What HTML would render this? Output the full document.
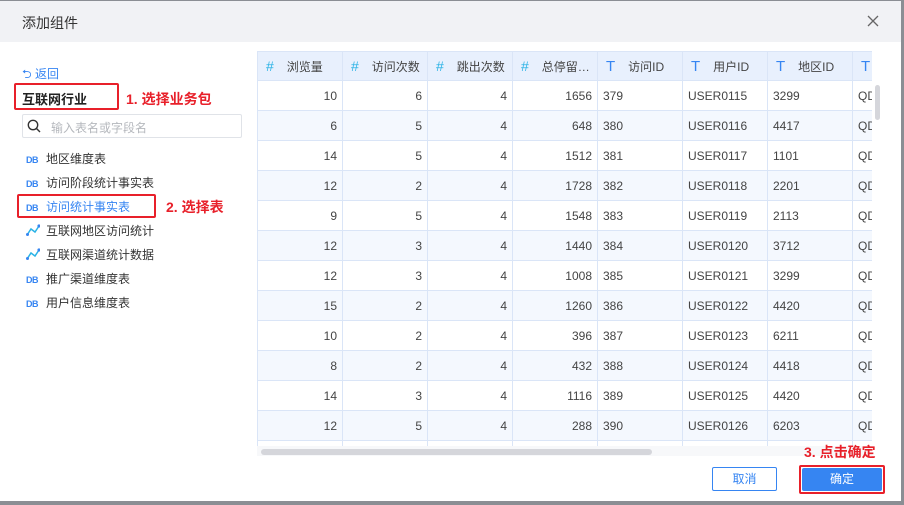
<!DOCTYPE html>
<html><head><meta charset="utf-8"><style>
*{margin:0;padding:0;box-sizing:border-box}
body{width:904px;height:505px;background:#8b8e94;font-family:"Liberation Sans","Noto Sans CJK SC",sans-serif;position:relative;overflow:hidden}
.dlg{position:absolute;left:0;top:1px;width:901px;height:500px;background:#fff}
.hd{height:41px;background:#f1f2f5;font-size:14px;color:#333;padding:12px 0 0 22px}
.abs{position:absolute}
.red{position:absolute;border:2px solid #e8202a;border-radius:2px}
.rt{position:absolute;color:#e8202a;font-size:14px;font-weight:bold}
.li{position:absolute;left:26px;font-size:12px;color:#333;white-space:nowrap}
.db{display:inline-block;width:14px;color:#3685f2;font-size:9px;font-weight:bold;margin-right:6px;letter-spacing:-0.5px}
table{border-collapse:collapse;position:absolute;table-layout:fixed;width:635px}
td,th{border:1px solid #dae5f7;height:30px;font-size:12px;color:#444;padding:0 5px;white-space:nowrap;overflow:hidden;font-weight:normal}
th{height:29px;background:#e8f0fd;text-align:left;color:#444}
th .h{color:#2bb3e6;font-size:14px;margin-right:13px;margin-left:3px}
th .t{color:#3685f2;font-size:15px;margin-right:13px;margin-left:3px}
td.n{text-align:right}
tr:nth-child(odd) td{background:#f4f8fe}
.clip{position:absolute;left:257px;top:51px;width:615px;height:395px;overflow:hidden}
.clip table{left:0;top:0}
.btn{position:absolute;font-size:12px;text-align:center;line-height:22px;border-radius:2px}
</style></head><body>
<div class="dlg">
<div class="hd">添加组件</div>
<svg class="abs" style="left:867px;top:14px" width="12" height="12"><path d="M1 1L11 11M11 1L1 11" stroke="#666" stroke-width="1.3"/></svg>
<div class="abs" style="left:22px;top:64px;font-size:12px;color:#3685f2">⮌ 返回</div>
<div class="abs" style="left:22px;top:88px;font-size:13px;font-weight:bold;color:#222">互联网行业</div>
<div class="red" style="left:14px;top:82px;width:105px;height:27px"></div>
<div class="rt" style="left:126px;top:88px">1. 选择业务包</div>
<div class="abs" style="left:22px;top:113px;width:220px;height:24px;border:1px solid #e0e3e8;border-radius:2px"></div>
<svg class="abs" style="left:27px;top:118px" width="14" height="14"><circle cx="6" cy="6" r="4.7" fill="none" stroke="#333" stroke-width="1.4"/><line x1="9.5" y1="9.5" x2="13" y2="13" stroke="#333" stroke-width="1.4"/></svg>
<div class="abs" style="left:51px;top:118px;font-size:12px;color:#b5b8bd">输入表名或字段名</div>
<div class="li" style="top:149px"><span class="db">DB</span>地区维度表</div>
<div class="li" style="top:173px"><span class="db">DB</span>访问阶段统计事实表</div>
<div class="li" style="top:197px;color:#3685f2"><span class="db">DB</span>访问统计事实表</div>
<div class="red" style="left:17px;top:193px;width:139px;height:24px"></div>
<div class="rt" style="left:166px;top:196px">2. 选择表</div>
<div class="li" style="top:221px"><svg width="14" height="12" style="margin-right:6px;vertical-align:-1px"><path d="M1 11L5 5L9 8L13 2" fill="none" stroke="#2bb3e6" stroke-width="1.5"/><circle cx="13" cy="2" r="1.6" fill="#3685f2"/><circle cx="1.5" cy="10.5" r="1.5" fill="#3685f2"/></svg>互联网地区访问统计</div>
<div class="li" style="top:245px"><svg width="14" height="12" style="margin-right:6px;vertical-align:-1px"><path d="M1 11L5 5L9 8L13 2" fill="none" stroke="#2bb3e6" stroke-width="1.5"/><circle cx="13" cy="2" r="1.6" fill="#3685f2"/><circle cx="1.5" cy="10.5" r="1.5" fill="#3685f2"/></svg>互联网渠道统计数据</div>
<div class="li" style="top:269px"><span class="db">DB</span>推广渠道维度表</div>
<div class="li" style="top:293px"><span class="db">DB</span>用户信息维度表</div>
</div>
<div class="clip"><table>
<colgroup><col style="width:85px"><col style="width:85px"><col style="width:85px"><col style="width:85px"><col style="width:85px"><col style="width:85px"><col style="width:85px"><col style="width:40px"></colgroup>
<tr><th><span class="h">#</span>浏览量</th><th><span class="h">#</span>访问次数</th><th><span class="h">#</span>跳出次数</th><th><span class="h">#</span>总停留…</th><th><span class="t">T</span>访问ID</th><th><span class="t">T</span>用户ID</th><th><span class="t">T</span>地区ID</th><th><span class="t">T</span></th></tr>
<tr><td class="n">10</td><td class="n">6</td><td class="n">4</td><td class="n">1656</td><td>379</td><td>USER0115</td><td>3299</td><td>QD</td></tr>
<tr><td class="n">6</td><td class="n">5</td><td class="n">4</td><td class="n">648</td><td>380</td><td>USER0116</td><td>4417</td><td>QD</td></tr>
<tr><td class="n">14</td><td class="n">5</td><td class="n">4</td><td class="n">1512</td><td>381</td><td>USER0117</td><td>1101</td><td>QD</td></tr>
<tr><td class="n">12</td><td class="n">2</td><td class="n">4</td><td class="n">1728</td><td>382</td><td>USER0118</td><td>2201</td><td>QD</td></tr>
<tr><td class="n">9</td><td class="n">5</td><td class="n">4</td><td class="n">1548</td><td>383</td><td>USER0119</td><td>2113</td><td>QD</td></tr>
<tr><td class="n">12</td><td class="n">3</td><td class="n">4</td><td class="n">1440</td><td>384</td><td>USER0120</td><td>3712</td><td>QD</td></tr>
<tr><td class="n">12</td><td class="n">3</td><td class="n">4</td><td class="n">1008</td><td>385</td><td>USER0121</td><td>3299</td><td>QD</td></tr>
<tr><td class="n">15</td><td class="n">2</td><td class="n">4</td><td class="n">1260</td><td>386</td><td>USER0122</td><td>4420</td><td>QD</td></tr>
<tr><td class="n">10</td><td class="n">2</td><td class="n">4</td><td class="n">396</td><td>387</td><td>USER0123</td><td>6211</td><td>QD</td></tr>
<tr><td class="n">8</td><td class="n">2</td><td class="n">4</td><td class="n">432</td><td>388</td><td>USER0124</td><td>4418</td><td>QD</td></tr>
<tr><td class="n">14</td><td class="n">3</td><td class="n">4</td><td class="n">1116</td><td>389</td><td>USER0125</td><td>4420</td><td>QD</td></tr>
<tr><td class="n">12</td><td class="n">5</td><td class="n">4</td><td class="n">288</td><td>390</td><td>USER0126</td><td>6203</td><td>QD</td></tr>
<tr><td class="n"></td><td></td><td></td><td></td><td></td><td></td><td></td><td></td></tr>
</table></div>
<div class="abs" style="left:257px;top:446px;width:615px;height:10px;background:#f7f8fa"></div>
<div class="abs" style="left:261px;top:449px;width:391px;height:6px;background:#d5d6db;border-radius:3px"></div>
<div class="abs" style="left:875px;top:85px;width:5px;height:35px;background:#d5d6db;border-radius:3px"></div>
<div class="rt" style="left:804px;top:442px">3. 点击确定</div>
<div class="btn" style="left:712px;top:467px;width:65px;height:24px;border:1px solid #3685f2;color:#3685f2;background:#fff">取消</div>
<div class="red" style="left:799px;top:465px;width:86px;height:29px"></div>
<div class="btn" style="left:802px;top:468px;width:80px;height:23px;background:#3685f2;color:#fff">确定</div>
</body></html>
